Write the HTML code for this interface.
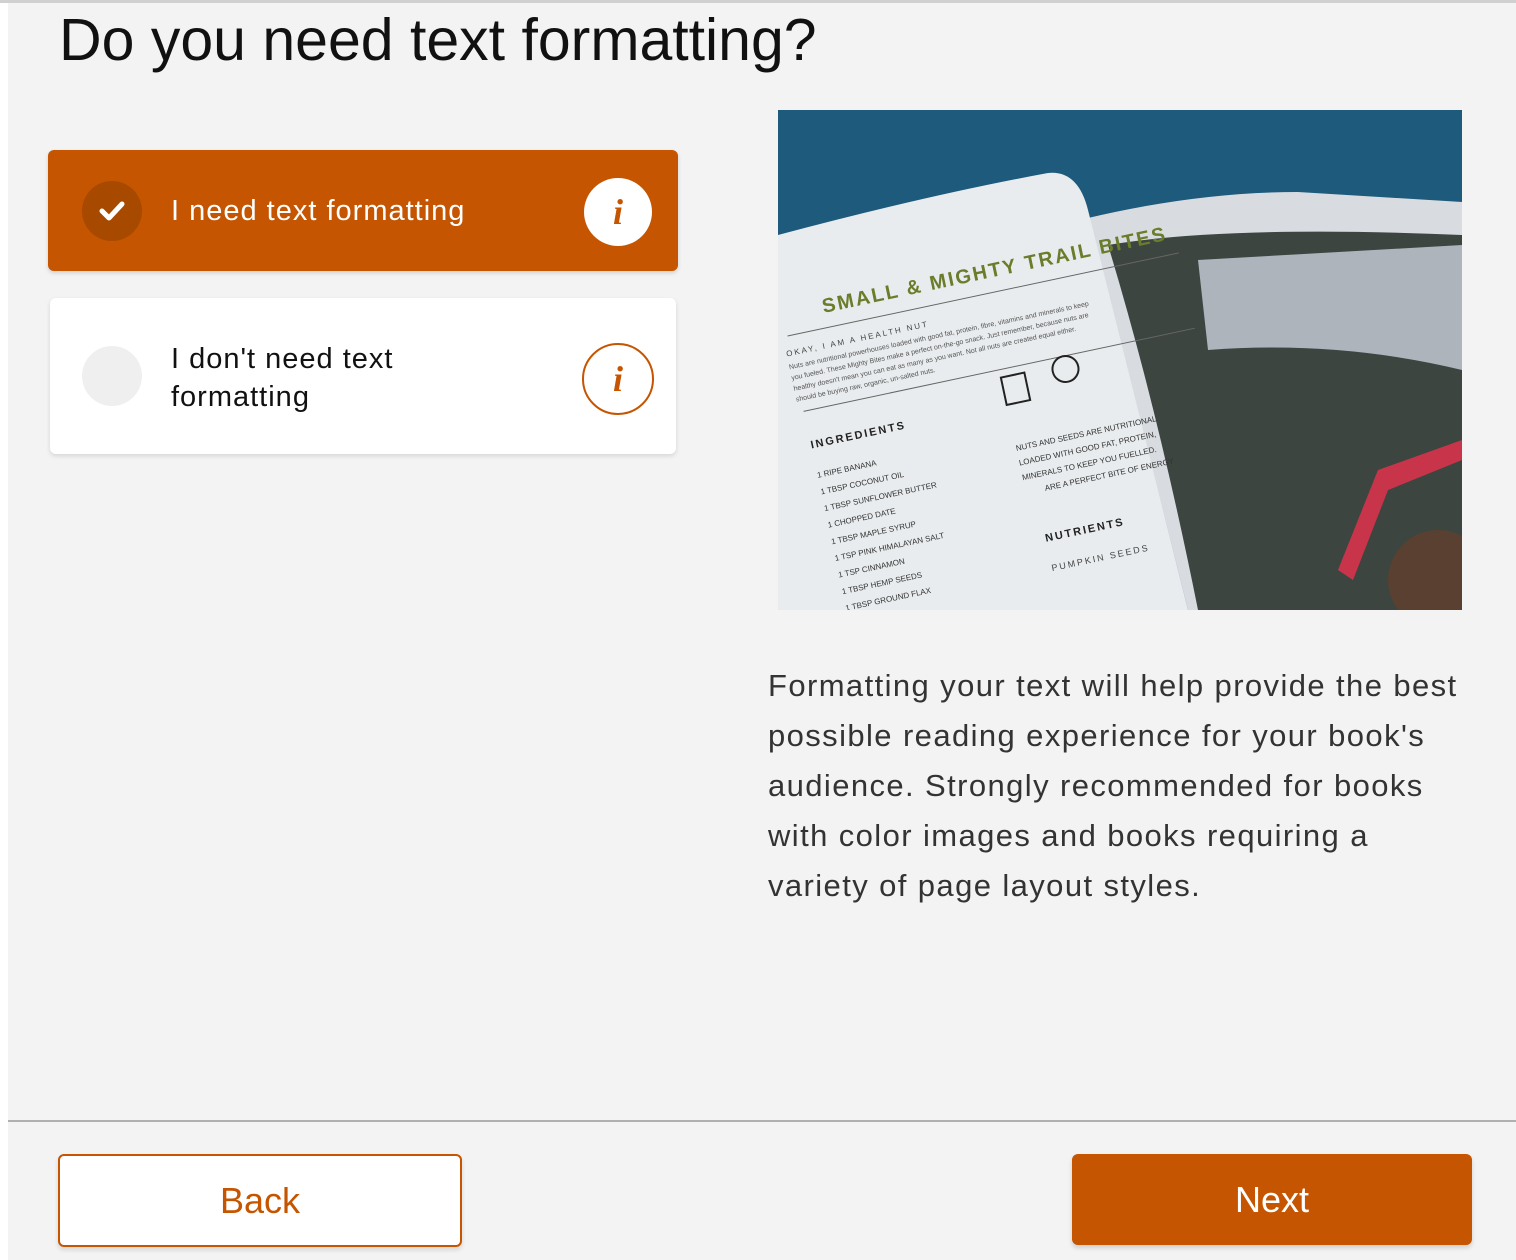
<!DOCTYPE html>
<html><head><meta charset="utf-8">
<style>
*{margin:0;padding:0;box-sizing:border-box}
body{width:1516px;height:1260px;background:#f3f3f3;position:relative;overflow:hidden;font-family:"Liberation Sans",sans-serif;color:#111}
.strip{position:absolute;left:0;top:0;width:8px;height:1260px;background:#fff}
.top{position:absolute;left:0;top:0;width:1516px;height:3px;background:#d0d0d0}
h1{position:absolute;left:59px;top:6px;font-size:59px;font-weight:400;letter-spacing:0px;white-space:nowrap;color:#111}
.opt{position:absolute;border-radius:6px}
.o1{left:48px;top:150px;width:630px;height:121px;background:#c55500;box-shadow:0 2px 4px rgba(0,0,0,.15)}
.o2{left:50px;top:298px;width:626px;height:156px;background:#fff;box-shadow:0 2px 5px rgba(0,0,0,.12)}
.circ{position:absolute;border-radius:50%}
.lbl{position:absolute;font-size:29px;letter-spacing:1px;white-space:nowrap}
.info{position:absolute;border-radius:50%;text-align:center;font-family:"Liberation Serif",serif;font-style:italic;font-weight:700;color:#c55500}
.desc{position:absolute;left:768px;top:661px;font-size:31px;line-height:50px;color:#333;letter-spacing:1.4px;white-space:nowrap}
.hr{position:absolute;left:8px;top:1120px;width:1508px;height:2px;background:#b0b0b0}
.btn{position:absolute;border-radius:6px;text-align:center;font-size:36px}
</style></head><body>
<div class="strip"></div><div class="top"></div>
<h1>Do you need text formatting?</h1>

<div class="opt o1">
  <div class="circ" style="left:34px;top:31px;width:60px;height:60px;background:#a84900"></div>
  <svg style="position:absolute;left:50px;top:47px" width="28" height="28" viewBox="0 0 28 28"><path d="M4 14 L11 21 L24 7" stroke="#fff" stroke-width="5" fill="none" stroke-linecap="round" stroke-linejoin="round"/></svg>
  <div class="lbl" style="left:123px;top:45px;color:#fff">I need text formatting</div>
  <div class="info" style="left:536px;top:28px;width:68px;height:68px;background:#fff;font-size:36px;line-height:68px">i</div>
</div>

<div class="opt o2">
  <div class="circ" style="left:32px;top:48px;width:60px;height:60px;background:#efefef"></div>
  <div class="lbl" style="left:121px;top:42px;line-height:38px">I don't need text<br>formatting</div>
  <div class="info" style="left:532px;top:45px;width:72px;height:72px;border:2px solid #c55500;font-size:36px;line-height:68px">i</div>
</div>

<svg style="position:absolute;left:778px;top:110px" width="684" height="500" viewBox="0 0 684 500">
  <rect width="684" height="500" fill="#1d5a7c"/>
  <path d="M310 108 Q420 82 520 82 L684 92 L684 500 L410 500 Q360 300 310 108Z" fill="#d8dce0"/>
  <path d="M330 135 Q450 115 684 125 L684 500 L420 500 Q380 300 330 135Z" fill="#3d4540"/>
  <path d="M420 150 L684 135 L684 260 Q560 230 430 240Z" fill="#aeb4bc"/>
  <path d="M560 460 L600 360 L684 330 L684 350 L610 380 L575 470Z" fill="#c8354a"/>
  <circle cx="660" cy="470" r="50" fill="#5a4030"/>
  <path d="M0 125 Q150 85 270 63 Q300 60 310 100 Q360 300 410 500 L0 500Z" fill="#e9ecee"/>
  <g transform="rotate(-12 200 160)" font-family="Liberation Sans,sans-serif">
    <text x="40" y="170" font-size="20" font-weight="700" fill="#6a7d2a" letter-spacing="2">SMALL &amp; MIGHTY TRAIL BITES</text>
    <line x1="0" y1="185" x2="400" y2="185" stroke="#666"/>
    <text x="-5" y="205" font-size="8" fill="#444" letter-spacing="2">OKAY, I AM A HEALTH NUT</text>
    <text x="-5" y="218" font-size="7" fill="#555">Nuts are nutritional powerhouses loaded with good fat, protein, fibre, vitamins and minerals to keep</text>
    <text x="-5" y="229" font-size="7" fill="#555">you fueled. These Mighty Bites make a perfect on-the-go snack. Just remember, because nuts are</text>
    <text x="-5" y="240" font-size="7" fill="#555">healthy doesn't mean you can eat as many as you want. Not all nuts are created equal either.</text>
    <text x="-5" y="251" font-size="7" fill="#555">should be buying raw, organic, un-salted nuts.</text>
    <line x1="0" y1="262" x2="400" y2="262" stroke="#666"/>
    <text x="0" y="300" font-size="11" font-weight="700" fill="#222" letter-spacing="2">INGREDIENTS</text>
    <g font-size="8" fill="#333"><text x="0" y="330">1 RIPE BANANA</text><text x="0" y="347">1 TBSP COCONUT OIL</text><text x="0" y="364">1 TBSP SUNFLOWER BUTTER</text><text x="0" y="381">1 CHOPPED DATE</text><text x="0" y="398">1 TBSP MAPLE SYRUP</text><text x="0" y="415">1 TSP PINK HIMALAYAN SALT</text><text x="0" y="432">1 TSP CINNAMON</text><text x="0" y="449">1 TBSP HEMP SEEDS</text><text x="0" y="466">1 TBSP GROUND FLAX</text></g>
    <g font-size="8" fill="#333"><text x="200" y="345">NUTS AND SEEDS ARE NUTRITIONAL</text><text x="200" y="360">LOADED WITH GOOD FAT, PROTEIN,</text><text x="200" y="375">MINERALS TO KEEP YOU FUELLED.</text><text x="220" y="390">ARE A PERFECT BITE OF ENERGY</text></g>
    <text x="210" y="440" font-size="11" font-weight="700" fill="#222" letter-spacing="2">NUTRIENTS</text>
    <text x="210" y="470" font-size="9" fill="#444" letter-spacing="2">PUMPKIN SEEDS</text>
    <rect x="200" y="270" width="24" height="28" fill="none" stroke="#222" stroke-width="2"/>
    <circle cx="265" cy="275" r="13" fill="none" stroke="#222" stroke-width="2"/>
  </g>
</svg>

<div class="desc">Formatting your text will help provide the best<br>possible reading experience for your book's<br>audience. Strongly recommended for books<br>with color images and books requiring a<br>variety of page layout styles.</div>

<div class="hr"></div>
<div class="btn" style="left:58px;top:1154px;width:404px;height:93px;background:#fff;border:2px solid #c55500;color:#c55500;line-height:89px;box-shadow:0 3px 5px rgba(0,0,0,.12)">Back</div>
<div class="btn" style="left:1072px;top:1154px;width:400px;height:91px;background:#c55500;color:#fff;line-height:91px;box-shadow:0 3px 5px rgba(0,0,0,.15)">Next</div>
</body></html>
